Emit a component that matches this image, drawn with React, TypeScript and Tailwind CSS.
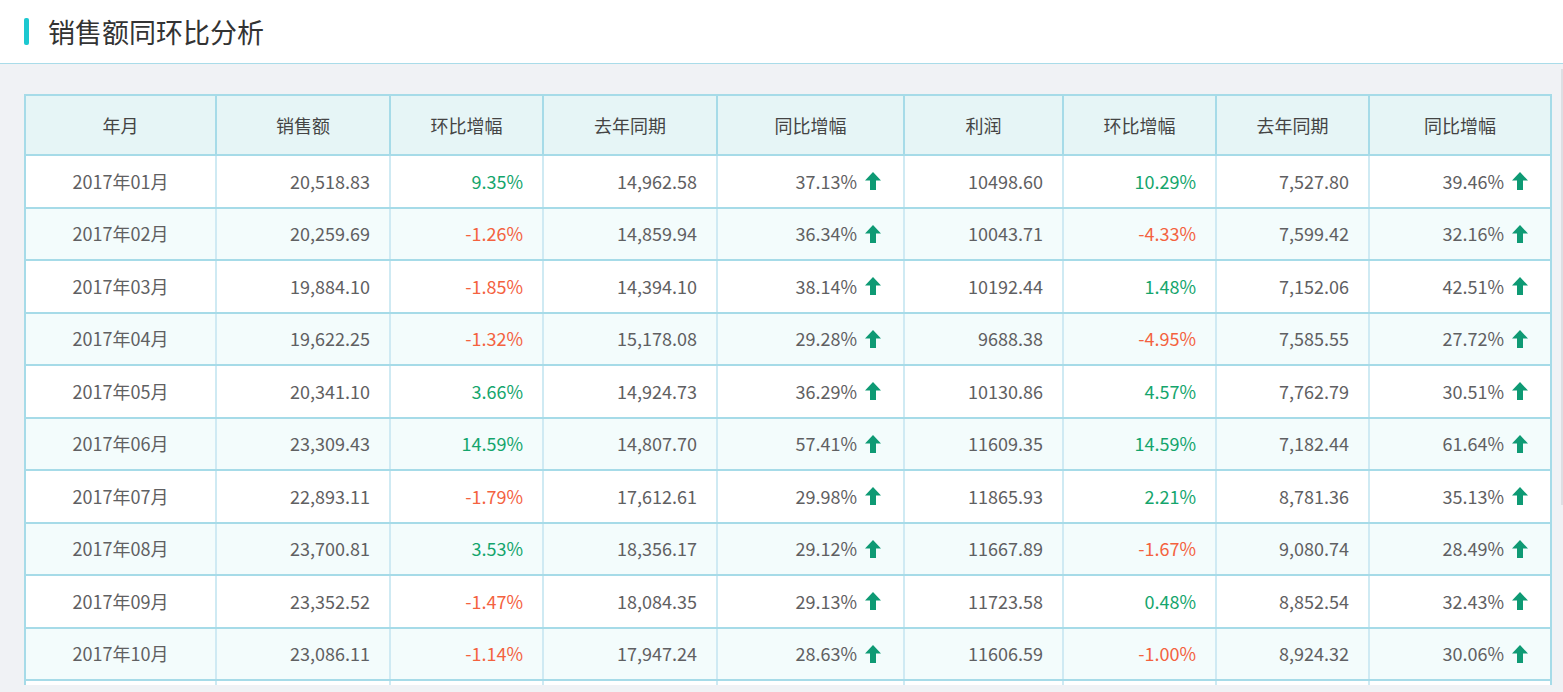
const rows = [
  ['2017年01月', '20,518.83', '9.35%', '14,962.58', '37.13%', '10498.60', '10.29%', '7,527.80', '39.46%'],
  ['2017年02月', '20,259.69', '-1.26%', '14,859.94', '36.34%', '10043.71', '-4.33%', '7,599.42', '32.16%'],
  ['2017年03月', '19,884.10', '-1.85%', '14,394.10', '38.14%', '10192.44', '1.48%', '7,152.06', '42.51%'],
  ['2017年04月', '19,622.25', '-1.32%', '15,178.08', '29.28%', '9688.38', '-4.95%', '7,585.55', '27.72%'],
  ['2017年05月', '20,341.10', '3.66%', '14,924.73', '36.29%', '10130.86', '4.57%', '7,762.79', '30.51%'],
  ['2017年06月', '23,309.43', '14.59%', '14,807.70', '57.41%', '11609.35', '14.59%', '7,182.44', '61.64%'],
  ['2017年07月', '22,893.11', '-1.79%', '17,612.61', '29.98%', '11865.93', '2.21%', '8,781.36', '35.13%'],
  ['2017年08月', '23,700.81', '3.53%', '18,356.17', '29.12%', '11667.89', '-1.67%', '9,080.74', '28.49%'],
  ['2017年09月', '23,352.52', '-1.47%', '18,084.35', '29.13%', '11723.58', '0.48%', '8,852.54', '32.43%'],
  ['2017年10月', '23,086.11', '-1.14%', '17,947.24', '28.63%', '11606.59', '-1.00%', '8,924.32', '30.06%'],
];

const headers = ['年月', '销售额', '环比增幅', '去年同期', '同比增幅', '利润', '环比增幅', '去年同期', '同比增幅'];
const widths = [191, 174, 153, 174, 187, 159, 153, 153, 182];

function UpArrow() {
  return (
    <svg width="16" height="18" viewBox="0 0 16 18" className="ml-2 inline-block shrink-0">
      <path d="M8 0 L16 8.5 L11 8.5 L11 18 L5 18 L5 8.5 L0 8.5 Z" fill="#0e9a74" />
    </svg>
  );
}

function Rate({ value }: { value: string }) {
  const neg = value.startsWith('-');
  return <span className={neg ? 'text-[#f4623f]' : 'text-[#14a56c]'}>{value}</span>;
}

export default function App() {
  return (
    <div
      className="h-[692px] w-full overflow-hidden bg-[#f0f2f5]"
      style={{ fontFamily: '"Noto Sans CJK SC", "Noto Sans", sans-serif' }}
    >
      {/* Title bar */}
      <div className="flex h-[64px] items-center border-b border-[#a9dce9] bg-white pl-[24px]">
        <div className="h-[27px] w-[5px] rounded-[2px] bg-[#1cc8d0]" />
        <h1 className="ml-[19px] text-[27px] leading-none text-[#333]">销售额同环比分析</h1>
      </div>

      {/* Scrollable content */}
      <div className="relative h-[621px] overflow-hidden">
        <div className="pl-[24px] pt-[30px]">
          <table className="w-[1527px] table-fixed border-collapse border-2 border-[#a6dbe8] bg-white text-[18px] text-[#5f6062]">
            <colgroup>
              {widths.map((w, i) => (
                <col key={i} style={{ width: w }} />
              ))}
            </colgroup>
            <thead>
              <tr className="h-[60px] bg-[#e6f5f6]">
                {headers.map((h, i) => (
                  <th key={i} className="border-2 border-[#a6dbe8] text-center font-normal text-[#444]">
                    {h}
                  </th>
                ))}
              </tr>
            </thead>
            <tbody>
              {rows.map((r, ri) => (
                <tr key={ri} className={`h-[52.5px] ${ri % 2 === 1 ? 'bg-[#f3fcfc]' : 'bg-white'}`}>
                  {r.map((c, ci) => {
                    const edge =
                      ci === 0 ? 'border-l-[#a6dbe8]' : ci === r.length - 1 ? 'border-r-[#a6dbe8]' : '';
                    const base = `border-2 border-x-[#cfeaf3] border-y-[#a6dbe8] ${edge}`;
                    if (ci === 0) {
                      return (
                        <td key={ci} className={`${base} text-center`}>
                          {c}
                        </td>
                      );
                    }
                    if (ci === 2 || ci === 6) {
                      return (
                        <td key={ci} className={`${base} pr-[19px] text-right`}>
                          <Rate value={c} />
                        </td>
                      );
                    }
                    if (ci === 4 || ci === 8) {
                      return (
                        <td key={ci} className={`${base} pr-[22px]`}>
                          <div className="flex items-center justify-end">
                            <span>{c}</span>
                            <UpArrow />
                          </div>
                        </td>
                      );
                    }
                    return (
                      <td key={ci} className={`${base} pr-[19px] text-right`}>
                        {c}
                      </td>
                    );
                  })}
                </tr>
              ))}
              {/* next row, cut off by the scroll area */}
              <tr className="h-[20px] bg-white">
                {widths.map((_, ci) => (
                  <td
                    key={ci}
                    className={`border-2 border-x-[#cfeaf3] border-y-[#a6dbe8] ${
                      ci === 0 ? 'border-l-[#a6dbe8]' : ci === widths.length - 1 ? 'border-r-[#a6dbe8]' : ''
                    }`}
                  />
                ))}
              </tr>
            </tbody>
          </table>
        </div>
        {/* scrollbar thumb */}
        <div className="absolute right-0 top-[5px] h-[436px] w-[2px] bg-[#dcdfe3]" />
      </div>
    </div>
  );
}
